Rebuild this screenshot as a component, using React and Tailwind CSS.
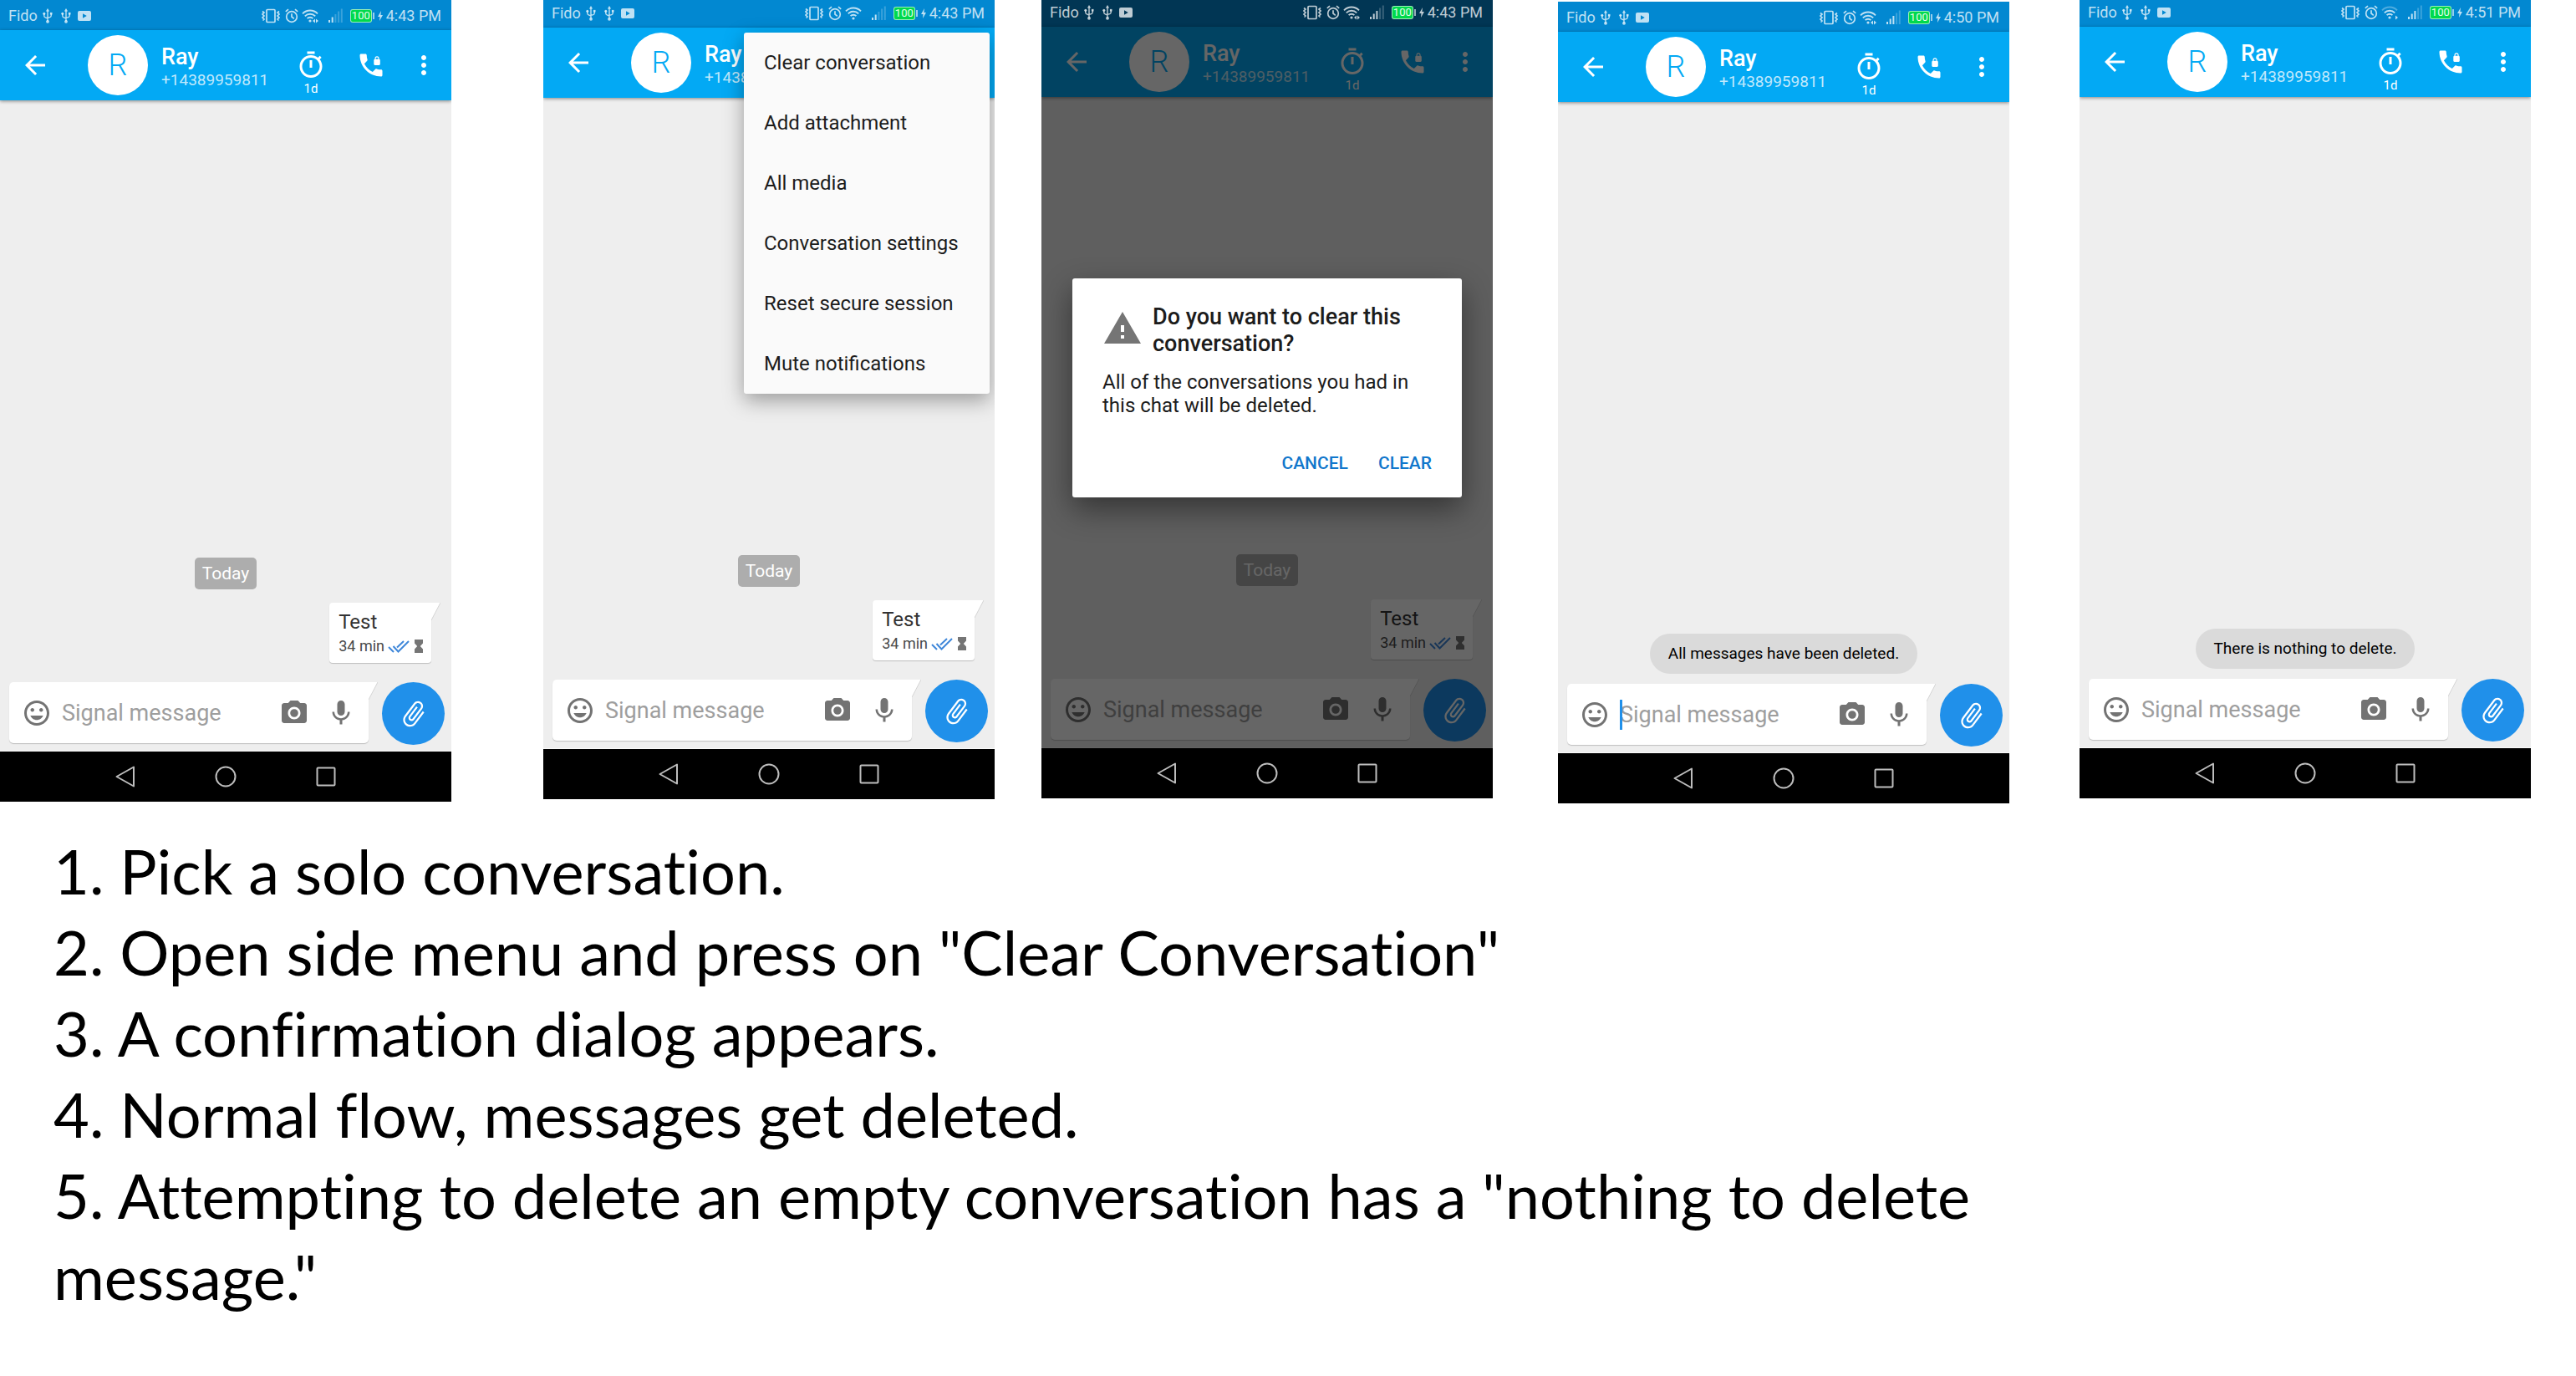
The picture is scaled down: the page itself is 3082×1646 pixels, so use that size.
import React from 'react';

const Material = ({ d, className }) => (
  <svg viewBox="0 0 24 24" fill="currentColor" aria-hidden="true" className={className}>
    <path d={d} />
  </svg>
);

const paths = {
  back: 'M20 11H7.83l5.59-5.59L12 4l-8 8 8 8 1.41-1.41L7.83 13H20v-2z',
  timer:
    'M15 1H9v2h6V1zm-4 13h2V8h-2v6zm8.03-6.61l1.42-1.42c-.43-.51-.9-.99-1.41-1.41l-1.42 1.42C16.07 4.74 14.12 4 12 4c-4.97 0-9 4.03-9 9s4.02 9 9 9 9-4.03 9-9c0-2.12-.74-4.07-1.97-5.61zM12 20c-3.87 0-7-3.13-7-7s3.13-7 7-7 7 3.13 7 7-3.13 7-7 7z',
  call:
    'M20 15.5c-1.25 0-2.45-.2-3.57-.57-.35-.11-.74-.03-1.02.24l-2.2 2.2c-2.83-1.44-5.15-3.75-6.59-6.58l2.2-2.21c.28-.27.36-.66.25-1.01C8.7 6.45 8.5 5.25 8.5 4c0-.55-.45-1-1-1H4c-.55 0-1 .45-1 1 0 9.39 7.61 17 17 17 .55 0 1-.45 1-1v-3.5c0-.55-.45-1-1-1zM18.400 7.200v-.6a1.700 1.700 0 0 0-3.400 0v.6c-.4 0-.8.4-.8.8v3.200c0 .4.4.8.8.8h3.400c.4 0 .8-.4.8-.8V8c0-.4-.4-.8-.8-.8zm-.7 0h-2v-.6a1 1 0 0 1 2 0v.6z',
  more:
    'M12 8c1.100 0 2-.9 2-2s-.9-2-2-2-2 .9-2 2 .9 2 2 2zm0 2c-1.100 0-2 .9-2 2s.9 2 2 2 2-.9 2-2-.9-2-2-2zm0 6c-1.100 0-2 .9-2 2s.9 2 2 2 2-.9 2-2-.9-2-2-2z',
  smile:
    'M11.99 2C6.47 2 2 6.48 2 12s4.47 10 9.99 10C17.52 22 22 17.52 22 12S17.52 2 11.99 2zM12 20c-4.42 0-8-3.58-8-8s3.58-8 8-8 8 3.58 8 8-3.58 8-8 8zm3.5-9c.83 0 1.5-.67 1.5-1.5S16.33 8 15.5 8 14 8.67 14 9.5s.67 1.5 1.5 1.5zm-7 0c.83 0 1.5-.67 1.5-1.5S9.33 8 8.5 8 7 8.67 7 9.5 7.67 11 8.5 11zm3.5 6.5c2.33 0 4.31-1.46 5.110-3.5H6.89c.8 2.04 2.78 3.5 5.110 3.5z',
  camera:
    'M12 8.800a3.200 3.200 0 1 0 0 6.400 3.200 3.200 0 0 0 0-6.400zM9 2L7.170 4H4c-1.100 0-2 .9-2 2v12c0 1.100.9 2 2 2h16c1.100 0 2-.9 2-2V6c0-1.100-.9-2-2-2h-3.170L15 2H9zm3 15c-2.760 0-5-2.240-5-5s2.240-5 5-5 5 2.240 5 5-2.240 5-5 5z',
  mic:
    'M12 14c1.660 0 2.990-1.340 2.990-3L15 5c0-1.660-1.340-3-3-3S9 3.340 9 5v6c0 1.660 1.340 3 3 3zm5.300-3c0 3-2.540 5.100-5.300 5.100S6.700 14 6.700 11H5c0 3.410 2.720 6.230 6 6.720V21h2v-3.280c3.280-.480 6-3.300 6-6.720h-1.700z',
  warning: 'M1 21h22L12 2 1 21zm12-3h-2v-2h2v2zm0-4h-2v-4h2v4z',
};

const Usb = () => (
  <svg viewBox="0 0 12 18" aria-hidden="true" className="h-[18px] w-3" fill="none" stroke="currentColor" strokeWidth="1.4">
    <path d="M6 3v12M1.800 6.500v2.600c0 1 .4 1.500 1.400 1.800L6 12M10.200 6.500v2.300c0 1-.4 1.500-1.400 1.800L6 11.400" />
    <path d="M6 0l2.100 3.400H3.900z" fill="currentColor" stroke="none" />
    <circle cx="6" cy="15.800" r="1.900" fill="currentColor" stroke="none" />
    <circle cx="1.800" cy="6.300" r="1.500" fill="currentColor" stroke="none" />
    <rect x="8.900" y="4.900" width="2.600" height="2.600" fill="currentColor" stroke="none" />
  </svg>
);

const Video = () => (
  <svg viewBox="0 0 16 12" aria-hidden="true" className="h-3 w-4" fill="currentColor">
    <path fillRule="evenodd" d="M2 0h12a2 2 0 0 1 2 2v8a2 2 0 0 1-2 2H2a2 2 0 0 1-2-2V2a2 2 0 0 1 2-2zm4 3.300v5.400L10.800 6z" />
  </svg>
);

const Vibrate = () => (
  <svg viewBox="0 0 22 18" aria-hidden="true" className="h-[18px] w-[22px]" fill="none" stroke="currentColor" strokeWidth="1.700">
    <rect x="6" y="1.500" width="10" height="15" rx="1" />
    <path d="M1 3.500l2 1.500-2 2 2 2-2 2 2 2-1.500 1.500M21 3.500l-2 1.500 2 2-2 2 2 2-2 2 1.500 1.500" />
  </svg>
);

const Alarm = () => (
  <svg viewBox="0 0 16 18" aria-hidden="true" className="h-[18px] w-4" fill="none" stroke="currentColor" strokeWidth="1.700">
    <circle cx="8" cy="10" r="6.300" />
    <path d="M8 6.200V10l2.800 2.300M.8 3.900L4 1.100M15.200 3.900L12 1.100" />
  </svg>
);

const Wifi = ({ arrows, weak }) => (
  <svg viewBox="0 0 20 18" aria-hidden="true" className="h-[18px] w-5" fill="none" stroke="currentColor" strokeWidth="1.900">
    <path d="M1 6.300a12.600 12.600 0 0 1 18 0" opacity={weak ? 0.4 : 1} />
    <path d="M3.800 9.300a8.700 8.700 0 0 1 12.400 0" />
    <path d="M6.600 12.200a4.800 4.800 0 0 1 6.800 0" />
    <circle cx="10" cy="15" r="1.600" fill="currentColor" stroke="none" />
    {arrows !== 'none' && <path d="M17 12.500v5l3-2.500z" fill="currentColor" stroke="none" />}
    {arrows === 'both' && <path d="M16 12.500v5l-3-2.500z" fill="currentColor" stroke="none" />}
  </svg>
);

const Signal = ({ bars }) => (
  <svg viewBox="0 0 18 18" aria-hidden="true" className="h-[18px] w-[18px]" fill="currentColor">
    {[0, 1, 2, 3, 4].map((i) => (
      <rect key={i} x={i * 3.700} y={[14, 10.500, 7, 3.500, 0.500][i]} width="2" height={[3, 6.500, 10, 13.500, 16.500][i]} opacity={i < bars ? 1 : 0.3} />
    ))}
  </svg>
);

const Bolt = () => (
  <svg viewBox="0 0 6 12" aria-hidden="true" className="h-3 w-1.5" fill="currentColor">
    <path d="M4 0L0 7h2.500L2 12l4-7H3.400z" />
  </svg>
);

function StatusBar({ time, arrows = 'both', weak, bars, dimmed }) {
  return (
    <div className={`flex h-9 items-center pt-0.5 pr-3 pl-2.5 text-lg leading-6 ${dimmed ? 'bg-[#013654]' : 'bg-[#0288d1]'}`}>
      <div className="flex items-center text-white/75">
        <span>Fido</span>
        <div className="ml-1.5 flex items-center gap-2.5"><Usb /><Usb /></div>
        <div className="ml-2"><Video /></div>
      </div>
      <div className="ml-auto flex items-center text-white/75">
        <Vibrate />
        <div className="ml-1.5"><Alarm /></div>
        <div className="ml-1"><Wifi arrows={arrows} weak={weak} /></div>
        <div className="ml-3"><Signal bars={bars} /></div>
        <div className="ml-2 flex items-center">
          <span className="flex h-4 items-center rounded-[3px] border border-white/60 bg-[#00d94c] px-px text-[13px] leading-3 text-white/90">100</span>
          <span className="ml-px h-2 w-0.5 bg-white/60" />
        </div>
        <div className="ml-1"><Bolt /></div>
        <span className="ml-1">{time}</span>
      </div>
    </div>
  );
}

function Header() {
  return (
    <header className="relative z-10 flex h-21 items-center bg-[#03a9f4] pr-[15px] pl-6 text-white shadow-[0_1px_4px_rgba(0,0,0,0.45)]">
      <button type="button" aria-label="Back"><Material d={paths.back} className="size-9" /></button>
      <div className="ml-[45px] flex size-18 shrink-0 items-center justify-center rounded-full bg-white text-4xl font-light text-[#03a9f4]">R</div>
      <div className="ml-4 pt-1">
        <div className="text-[27px] leading-8 font-medium">Ray</div>
        <div className="text-[19px] leading-6 text-white/75">+14389959811</div>
      </div>
      <button type="button" aria-label="Disappearing messages, 1 day" className="ml-auto flex h-full w-9 flex-col items-center pt-6">
        <Material d={paths.timer} className="size-9" />
        <span className="text-[15px] leading-5">1d</span>
      </button>
      <button type="button" aria-label="Secure call" className="ml-9"><Material d={paths.call} className="size-9" /></button>
      <button type="button" aria-label="More options" className="ml-[27px]"><Material d={paths.more} className="size-9" /></button>
    </header>
  );
}

const Tail = () => (
  <svg viewBox="0 0 11 22" aria-hidden="true" className="h-[22px] w-[11px] shrink-0">
    <path d="M0 0h11L0 21z" fill="#fff" />
    <path d="M11 0L0 21" stroke="#d4d4d4" strokeWidth="1" />
  </svg>
);

function Messages() {
  return (
    <>
      <div className="self-center rounded-[5px] bg-[#adadad] px-[9px] py-1 text-[21px] leading-[30px] text-white">Today</div>
      <div className="mt-4 mr-[13px] mb-[23px] flex items-start self-end">
        <div className="rounded-[4px] rounded-tr-none bg-white pt-2 pr-2.5 pb-2 pl-[11px] shadow-[0_1px_1px_rgba(0,0,0,0.2)]">
          <div className="text-2xl leading-[30px] text-[#333]">Test</div>
          <div className="mt-0.5 flex items-center text-lg leading-6 text-[#4a4a4a]">
            34 min
            <svg viewBox="0 0 26 15" aria-label="Read" className="ml-1 h-[15px] w-[26px]" fill="none" stroke="#3f87d9" strokeWidth="2">
              <path d="M1 8l6 6M6.500 7l6 6.500L25 1M11 8.500l8-7.500" />
            </svg>
            <svg viewBox="0 0 10 16" aria-label="Disappearing" className="ml-1.5 h-4 w-2.5" fill="#757575">
              <path d="M0 0h10v4.500L6.800 8l3.200 3.500V16H0v-4.500L3.200 8 0 4.500z" />
            </svg>
          </div>
        </div>
        <Tail />
      </div>
    </>
  );
}

function Composer({ id, focused }) {
  return (
    <div className="flex items-start border-b border-[#fafafa] pr-2 pb-[7px] pl-[11px]">
      <div className="flex h-[73px] min-w-0 flex-1 items-center rounded-[5px] rounded-tr-none bg-white px-[15px] text-[#737373] shadow-[0_1px_1px_rgba(0,0,0,0.2)]">
        <button type="button" aria-label="Emoji"><Material d={paths.smile} className="size-9" /></button>
        <div className="relative ml-3 min-w-0 flex-1">
          <input id={id} aria-label="Signal message" placeholder="Signal message" className="block w-full text-[27px] leading-9 text-black outline-none placeholder:text-[#9e9e9e]" />
          {focused && <span className="absolute inset-y-0 left-0 w-[3px] bg-[#2090ea]" />}
        </div>
        <button type="button" aria-label="Camera"><Material d={paths.camera} className="size-9" /></button>
        <button type="button" aria-label="Voice message" className="ml-5"><Material d={paths.mic} className="size-9" /></button>
      </div>
      <Tail />
      <button type="button" aria-label="Attach" className="ml-[5px] flex size-[75px] shrink-0 items-center justify-center rounded-full bg-[#2090ea] text-white">
        <svg viewBox="0 0 24 24" aria-hidden="true" className="size-9" fill="currentColor">
          <path
            transform="rotate(37 12 12)"
            d="M16.500 6v11.500c0 2.210-1.790 4-4 4s-4-1.790-4-4V5c0-1.380 1.120-2.500 2.500-2.500s2.500 1.120 2.500 2.500v10.500c0 .55-.45 1-1 1s-1-.45-1-1V6H10v9.500c0 1.380 1.120 2.500 2.500 2.500s2.500-1.120 2.500-2.500V5c0-2.210-1.790-4-4-4S7 2.790 7 5v12.500c0 3.040 2.460 5.500 5.500 5.500s5.500-2.460 5.500-5.500V6h-1.500z"
          />
        </svg>
      </button>
    </div>
  );
}

function NavBar() {
  return (
    <nav aria-label="System" className="flex h-15 items-center justify-center gap-[94px] bg-black text-[#bdbdbd]">
      <button type="button" aria-label="Back">
        <svg viewBox="0 0 26 26" className="size-[26px]" fill="none" stroke="currentColor" strokeWidth="2" strokeLinejoin="round"><path d="M23 1.500v23L2.500 13z" /></svg>
      </button>
      <button type="button" aria-label="Home">
        <svg viewBox="0 0 26 26" className="size-[26px]" fill="none" stroke="currentColor" strokeWidth="2"><circle cx="13" cy="13" r="11.500" /></svg>
      </button>
      <button type="button" aria-label="Recent apps">
        <svg viewBox="0 0 26 26" className="size-[26px]" fill="none" stroke="currentColor" strokeWidth="2"><rect x="2.500" y="2.500" width="21" height="21" rx="1" /></svg>
      </button>
    </nav>
  );
}

const menuItems = ['Clear conversation', 'Add attachment', 'All media', 'Conversation settings', 'Reset secure session', 'Mute notifications'];

function Menu() {
  return (
    <ul className="absolute top-[42px] right-1.5 z-20 w-[294px] rounded-[3px] bg-[#fafafa] shadow-[0_8px_24px_rgba(0,0,0,0.35)]">
      {menuItems.map((item) => (
        <li key={item}>
          <button type="button" className="h-18 w-full px-6 text-left text-2xl text-[#1c1c1c]">{item}</button>
        </li>
      ))}
    </ul>
  );
}

function Dialog() {
  return (
    <div className="absolute inset-0 z-20 flex items-center justify-center bg-black/60 px-[37px]">
      <div role="dialog" aria-labelledby="clear-title" className="w-full rounded-[3px] bg-white px-9 pt-[30px] pb-3 text-[#1c1c1c] shadow-[0_14px_36px_rgba(0,0,0,0.45)]">
        <div className="flex items-start gap-3">
          <Material d={paths.warning} className="mt-1.5 size-12 shrink-0 text-[#757575]" />
          <h2 id="clear-title" className="text-[27px] leading-8 font-medium">Do you want to clear this conversation?</h2>
        </div>
        <p className="mt-4 text-2xl leading-7">All of the conversations you had in this chat will be deleted.</p>
        <div className="mt-[26px] flex justify-end gap-9 text-[21px] leading-[58px] font-medium text-[#1177cc]">
          <button type="button">CANCEL</button>
          <button type="button">CLEAR</button>
        </div>
      </div>
    </div>
  );
}

const Toast = ({ children }) => (
  <div role="status" className="mb-3 self-center rounded-full bg-[#dadada] px-[22px] text-[19px] leading-[48px] text-black">{children}</div>
);

function Phone({ id, className, status, messages, menu, dialog, toast, focused }) {
  return (
    <section className={`relative min-w-0 flex-1 overflow-hidden ${className}`}>
      <StatusBar {...status} dimmed={dialog} />
      <div className="relative">
        <Header />
        <main className="bg-[#eee]">
          <div className="flex min-h-[696px] flex-col justify-end">
            {messages && <Messages />}
            {toast && <Toast>{toast}</Toast>}
          </div>
          <Composer id={id} focused={focused} />
        </main>
        {dialog && <Dialog />}
      </div>
      {menu && <Menu />}
      <NavBar />
    </section>
  );
}

const steps = [
  '1. Pick a solo conversation.',
  '2. Open side menu and press on "Clear Conversation"',
  '3. A confirmation dialog appears.',
  '4. Normal flow, messages get deleted.',
  '5. Attempting to delete an empty conversation has a "nothing to delete message."',
];

export default function App() {
  return (
    <div className="min-h-screen overflow-hidden bg-white font-['Roboto',sans-serif]">
      <div className="flex items-start pr-[54px]">
        <Phone id="message-1" status={{ time: '4:43 PM', bars: 2 }} messages className="" />
        <Phone id="message-2" status={{ time: '4:43 PM', bars: 2, arrows: 'none' }} messages menu className="-mt-[3px] ml-[110px]" />
        <Phone id="message-3" status={{ time: '4:43 PM', bars: 3 }} messages dialog className="-mt-1 ml-14" />
        <Phone id="message-4" status={{ time: '4:50 PM', bars: 3 }} toast="All messages have been deleted." focused className="mt-0.5 ml-[78px]" />
        <Phone id="message-5" status={{ time: '4:51 PM', bars: 3, arrows: 'one', weak: true }} toast="There is nothing to delete." className="-mt-1 ml-[84px]" />
      </div>
      <ol className="mt-8 max-w-[2500px] pl-16 font-['Lato',sans-serif] text-[74px] leading-[97px] text-black [font-variant-ligatures:none]">
        {steps.map((step) => (
          <li key={step}>{step}</li>
        ))}
      </ol>
    </div>
  );
}
